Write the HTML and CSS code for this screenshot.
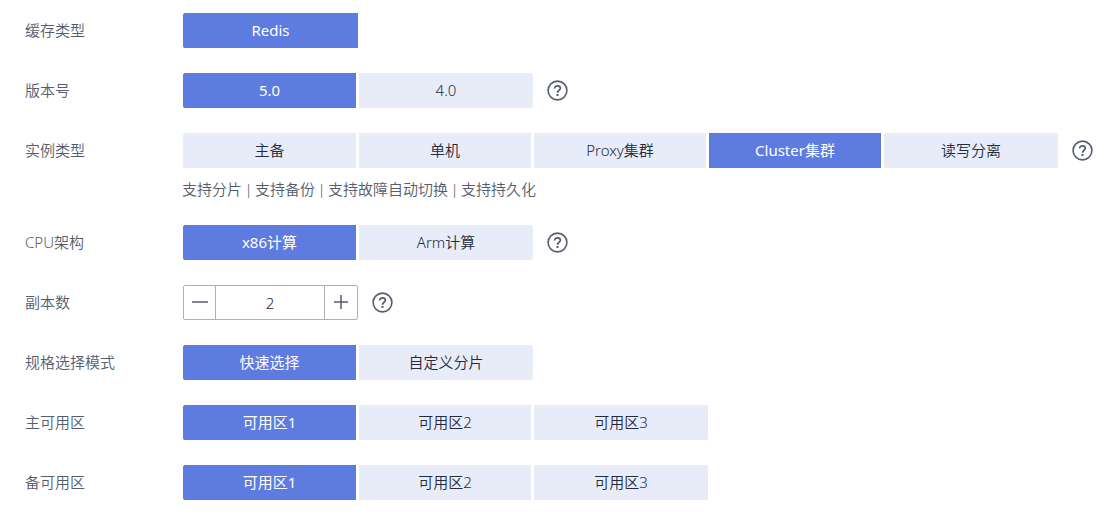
FILE: index.html
```html
<!DOCTYPE html>
<html lang="zh-CN">
<head>
<meta charset="utf-8">
<meta name="viewport" content="width=device-width, initial-scale=1">
<title>Redis</title>
<link rel="stylesheet" href="styles.css">
</head>
<body>
<svg class="symbols" aria-hidden="true">
  <symbol id="help" viewBox="0 0 21 21">
    <circle cx="10.5" cy="10.5" r="9.4" fill="none" stroke="currentColor" stroke-width="1.6"/>
    <path d="M7.6 8.6C7.6 6.8 8.8 5.8 10.5 5.8s2.9 1 2.9 2.5c0 1.9-2.9 2-2.9 4.4" fill="none" stroke="currentColor" stroke-width="1.7"/>
    <rect x="9.5" y="14" width="2" height="2" fill="currentColor"/>
  </symbol>
</svg>
<form class="form">
  <div class="row">
    <span class="label" id="l-cache">缓存类型</span>
    <div class="group" role="group" aria-labelledby="l-cache"><button type="button" class="option selected">Redis</button></div>
  </div>
  <div class="row">
    <span class="label" id="l-version">版本号</span>
    <div class="group" role="group" aria-labelledby="l-version"><button type="button" class="option selected">5.0</button><button type="button" class="option">4.0</button></div>
    <button type="button" class="help" aria-label="帮助"><svg><use href="#help"/></svg></button>
  </div>
  <div class="field">
    <div class="row">
      <span class="label" id="l-type">实例类型</span>
      <div class="group" role="group" aria-labelledby="l-type"><button type="button" class="option">主备</button><button type="button" class="option">单机</button><button type="button" class="option">Proxy集群</button><button type="button" class="option selected">Cluster集群</button><button type="button" class="option">读写分离</button></div>
      <button type="button" class="help" aria-label="帮助"><svg><use href="#help"/></svg></button>
    </div>
    <p class="hint"><span>支持分片</span><span class="sep">|</span><span>支持备份</span><span class="sep">|</span><span>支持故障自动切换</span><span class="sep">|</span><span>支持持久化</span></p>
  </div>
  <div class="row">
    <span class="label" id="l-cpu">CPU架构</span>
    <div class="group" role="group" aria-labelledby="l-cpu"><button type="button" class="option selected">x86计算</button><button type="button" class="option">Arm计算</button></div>
    <button type="button" class="help" aria-label="帮助"><svg><use href="#help"/></svg></button>
  </div>
  <div class="row">
    <label class="label" for="replicas">副本数</label>
    <div class="stepper">
      <button type="button" class="step" aria-label="减少"><svg viewBox="0 0 16 16"><path d="M0 8h16" stroke="currentColor" stroke-width="1.5"/></svg></button>
      <input class="count" id="replicas" type="text" inputmode="numeric" value="2">
      <button type="button" class="step" aria-label="增加"><svg viewBox="0 0 16 16"><path d="M1 8h14M8 1v14" stroke="currentColor" stroke-width="1.5"/></svg></button>
    </div>
    <button type="button" class="help" aria-label="帮助"><svg><use href="#help"/></svg></button>
  </div>
  <div class="row">
    <span class="label" id="l-mode">规格选择模式</span>
    <div class="group" role="group" aria-labelledby="l-mode"><button type="button" class="option selected">快速选择</button><button type="button" class="option">自定义分片</button></div>
  </div>
  <div class="row">
    <span class="label" id="l-primary">主可用区</span>
    <div class="group" role="group" aria-labelledby="l-primary"><button type="button" class="option selected">可用区1</button><button type="button" class="option">可用区2</button><button type="button" class="option">可用区3</button></div>
  </div>
  <div class="row">
    <span class="label" id="l-standby">备可用区</span>
    <div class="group" role="group" aria-labelledby="l-standby"><button type="button" class="option selected">可用区1</button><button type="button" class="option">可用区2</button><button type="button" class="option">可用区3</button></div>
  </div>
</form>
</body>
</html>
```
FILE: styles.css
```css
* { box-sizing: border-box; }

body {
  margin: 0;
  background: #fff;
  color: #575d6c;
  font: 350 15px/20px "Noto Sans", "Noto Sans CJK SC", sans-serif;
}

button, input { font: inherit; }

.symbols { display: none; }

.form {
  display: flex;
  flex-direction: column;
  gap: 25px;
  padding: 13px 15px 15px 25px;
}

.row {
  display: flex;
  align-items: center;
}

.label {
  flex: 0 0 158px;
  padding-bottom: 2px;
}

.group {
  display: flex;
  gap: 3px;
}

.option {
  flex: 0 1 172px;
  width: 172px;
  height: 35px;
  padding: 0 0 2px;
  border: 0;
  background: #e8ecf9;
  color: #252b3a;
  white-space: nowrap;
}

.option:first-child {
  flex-basis: 173px;
  width: 173px;
  border-radius: 2px 0 0 2px;
}

.option:last-child {
  flex-basis: 174px;
  width: 174px;
  border-radius: 0 2px 2px 0;
}

.option:only-child {
  flex-basis: 175px;
  width: 175px;
  border-radius: 2px 0 0 2px;
}

.option.selected {
  background: #5e7ce0;
  color: #fff;
  font-weight: 400;
}

.help {
  flex: none;
  width: 21px;
  height: 21px;
  margin-left: 14px;
  padding: 0;
  border: 0;
  background: none;
  color: #575d6c;
}

.help svg {
  display: block;
  width: 21px;
  height: 21px;
}

.hint {
  display: flex;
  margin: 11px 0 0 157px;
  padding-bottom: 1px;
}

.sep {
  width: 13px;
  text-align: center;
}

.stepper {
  display: flex;
  width: 175px;
  height: 35px;
  border: 1px solid #adb0b8;
  border-radius: 2px;
}

.step {
  display: grid;
  flex: 0 0 32px;
  place-items: center;
  padding: 0 0 2px;
  border: 0;
  background: none;
  color: #575d6c;
}

.step:first-child { flex-basis: 31px; }

.step svg {
  width: 16px;
  height: 16px;
}

.count {
  flex: 1;
  min-width: 0;
  padding: 0;
  border: solid #adb0b8;
  border-width: 0 1px;
  background: none;
  color: #252b3a;
  text-align: center;
}
```
